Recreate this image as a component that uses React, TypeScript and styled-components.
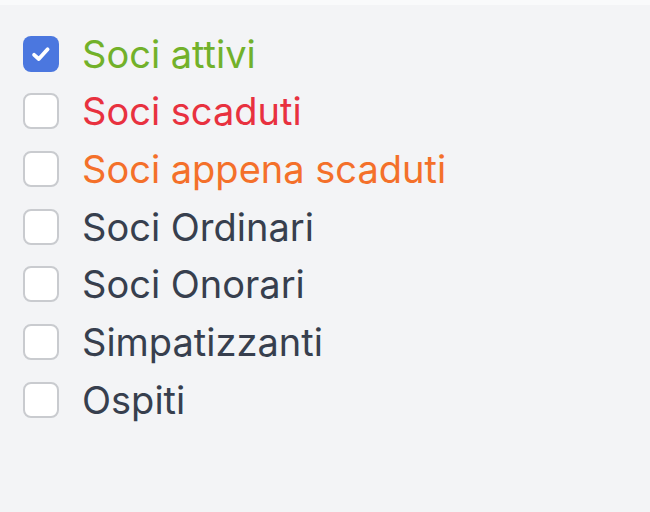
import React, { useState } from "react";
import styled, { createGlobalStyle } from "styled-components";

const Global = createGlobalStyle`
  html, body { margin: 0; padding: 0; background: #f3f4f6; }
  body { font-family: Inter, "Noto Sans", sans-serif; }
`;

const Page = styled.div`
  width: 650px;
  height: 512px;
  background: #f3f4f6;
  display: flex;
  flex-direction: column;
`;

const TopStrip = styled.div`
  height: 5px;
  background: #f9fafb;
`;

const List = styled.div`
  display: flex;
  flex-direction: column;
  padding: 20px 0 0 23px;
`;

const Row = styled.label`
  display: flex;
  align-items: center;
  gap: 23px;
  height: 57.67px;
  cursor: pointer;
`;

const Box = styled.span<{ $checked: boolean }>`
  width: 36px;
  height: 36px;
  box-sizing: border-box;
  border-radius: 8px;
  border: ${(p) => (p.$checked ? "none" : "2px solid #c9cbcf")};
  background: ${(p) => (p.$checked ? "#4b77df" : "#ffffff")};
  display: flex;
  align-items: center;
  justify-content: center;
  flex-shrink: 0;
`;

const Label = styled.span<{ $color: string }>`
  font-family: Inter, "Noto Sans", sans-serif;
  font-size: 38px;
  line-height: 1;
  color: ${(p) => p.$color};
`;

const items = [
  { label: "Soci attivi", color: "#72b12a", checked: true },
  { label: "Soci scaduti", color: "#e8313f", checked: false },
  { label: "Soci appena scaduti", color: "#f4702a", checked: false },
  { label: "Soci Ordinari", color: "#373f4e", checked: false },
  { label: "Soci Onorari", color: "#373f4e", checked: false },
  { label: "Simpatizzanti", color: "#373f4e", checked: false },
  { label: "Ospiti", color: "#373f4e", checked: false },
];

export default function App() {
  const [state, setState] = useState(items.map((i) => i.checked));
  return (
    <Page>
      <Global />
      <TopStrip />
      <List>
        {items.map((it, i) => (
          <Row key={it.label} onClick={() => setState((s) => s.map((v, j) => (j === i ? !v : v)))}>
            <Box $checked={state[i]}>
              {state[i] && (
                <svg width="22" height="22" viewBox="0 0 16 16">
                  <path d="M3 8.6 L6.4 11.6 L12.8 4.6" fill="none" stroke="#fff" strokeWidth="2.8" strokeLinecap="round" strokeLinejoin="round" />
                </svg>
              )}
            </Box>
            <Label $color={it.color}>{it.label}</Label>
          </Row>
        ))}
      </List>
    </Page>
  );
}
